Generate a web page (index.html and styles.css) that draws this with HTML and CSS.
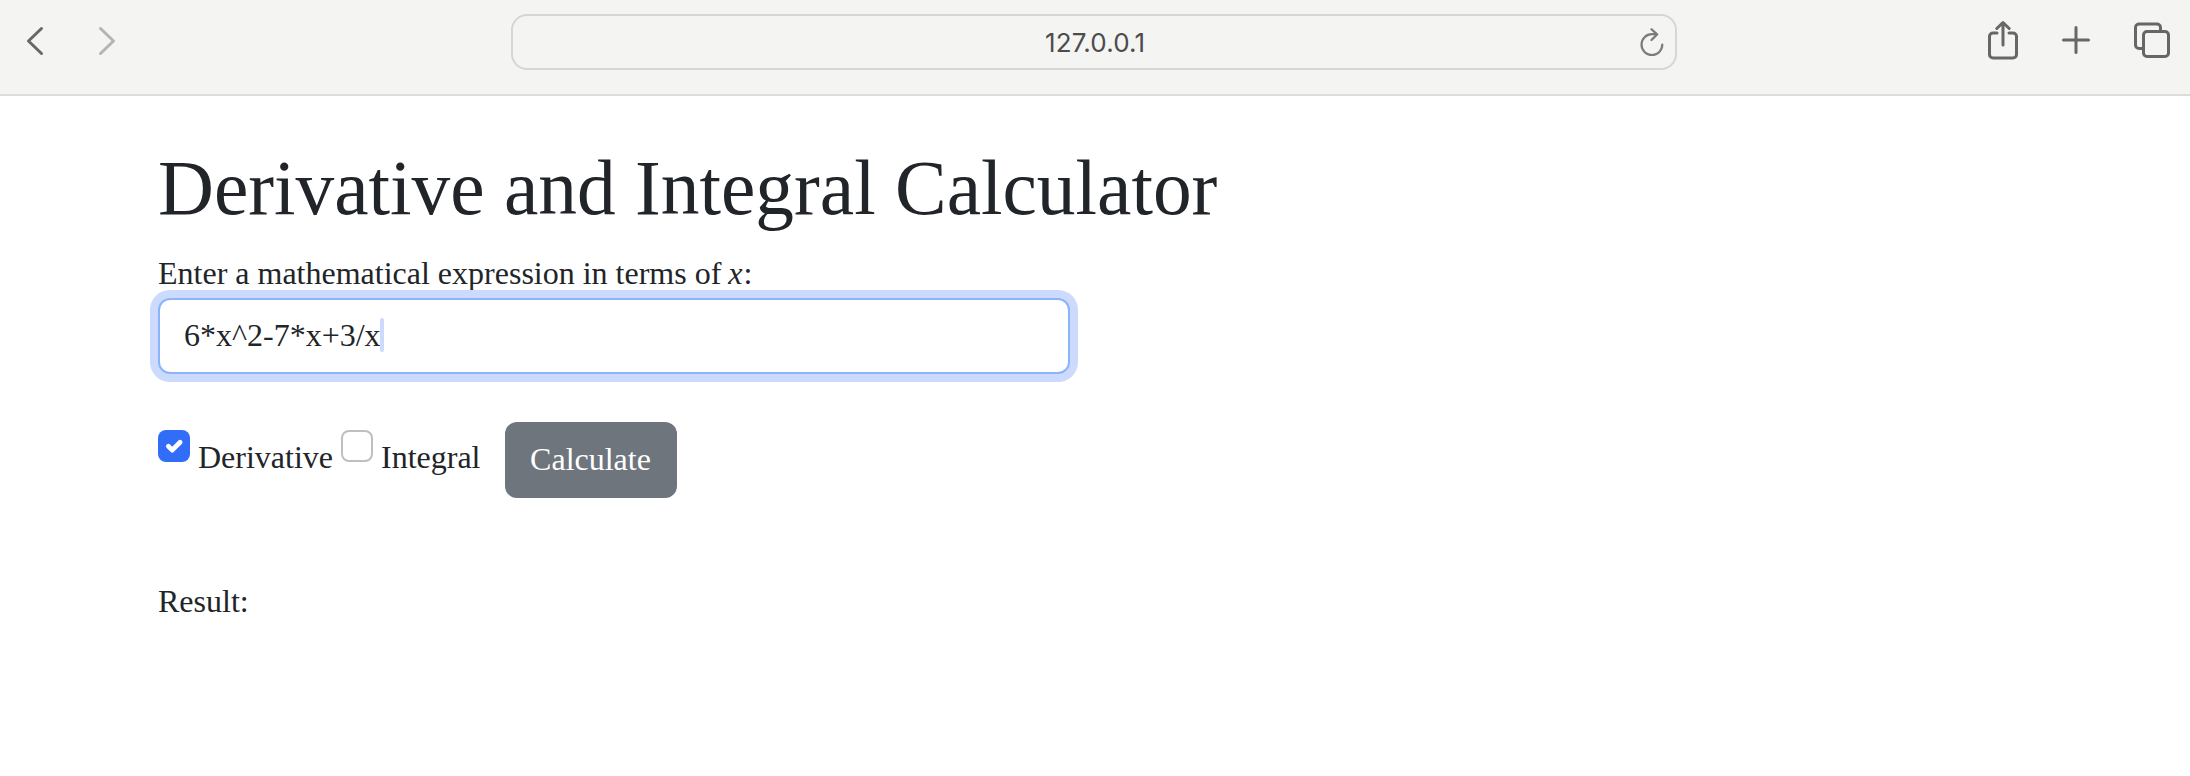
FILE: index.html
```html
<!DOCTYPE html>
<html lang="en">
<head>
<meta charset="utf-8">
<title>Derivative and Integral Calculator</title>
<link rel="stylesheet" href="styles.css">
</head>
<body>
<header class="toolbar">
  <nav class="history">
    <svg class="icon" width="20" height="32" viewBox="0 0 20 32"><path d="M16.5 3.500 3.500 16l13 12.500"/></svg>
    <svg class="icon icon-disabled" width="20" height="32" viewBox="0 0 20 32"><path d="M3.500 3.500l13 12.500-13 12.500"/></svg>
  </nav>
  <div class="address">
    <span class="url">127.0.0.1</span>
    <svg class="reload" width="26" height="30" viewBox="0 0 26 30"><path d="M23.300 16.500A10.400 10.400 0 1 1 13 6.200h5M12.500 1.200l5.600 5.200-5.600 5.600"/></svg>
  </div>
  <div class="actions">
    <svg class="icon" width="30" height="40" viewBox="0 0 30 40"><path d="M9 13H5a3.5 3.5 0 0 0-3.5 3.5v18A3.5 3.5 0 0 0 5 38h20a3.5 3.5 0 0 0 3.5-3.5v-18A3.5 3.5 0 0 0 25 13h-4M15 25V3M8.800 8.500 15 2.500l6.200 6"/></svg>
    <svg class="icon" width="28" height="28" viewBox="0 0 28 28"><path d="M14 1.500v25M1.500 14h25"/></svg>
    <svg class="icon" width="36" height="36" viewBox="0 0 36 36"><rect x="9.500" y="9.500" width="25" height="25" rx="3.500"/><path d="M9.500 26.500H5A3.500 3.500 0 0 1 1.500 23V5.500A3.500 3.500 0 0 1 5 2h18a3.500 3.500 0 0 1 3.500 3.500v4"/></svg>
  </div>
</header>
<main class="page">
  <h1 class="title">Derivative and Integral Calculator</h1>
  <div class="label">Enter a mathematical expression in terms of <i class="variable">x</i>:</div>
  <div class="field"><span class="expression">6*x^2-7*x+3/x</span><span class="caret"></span></div>
  <div class="controls">
    <span class="check check-on"><svg width="32" height="32" viewBox="0 0 20 20"><path d="m6.500 10.200 2.400 2.400 4.900-4.900"/></svg></span>
    <span class="option option-first">Derivative</span>
    <span class="check"></span>
    <span class="option">Integral</span>
    <button class="button">Calculate</button>
  </div>
  <p class="result">Result:</p>
</main>
</body>
</html>
```
FILE: styles.css
```css
* { box-sizing: border-box; }

body {
  margin: 0;
  background: #fff;
  color: #212529;
  font: 32px/48px "Liberation Serif", "Times New Roman", serif;
}

.toolbar {
  display: grid;
  grid-template-columns: 511px 1166px 1fr;
  height: 96px;
  padding-top: 14px;
  background: #f4f4f2;
  border-bottom: 2px solid #dcdcda;
}

.history {
  display: flex;
  gap: 52px;
  padding: 11px 0 0 25px;
}

.icon {
  fill: none;
  stroke: #676765;
  stroke-width: 3;
  stroke-linecap: round;
  stroke-linejoin: round;
}

.icon-disabled { stroke: #b4b4b2; }

.address {
  display: flex;
  align-items: center;
  height: 56px;
  padding-right: 10px;
  border: 2px solid #d6d6d4;
  border-radius: 16px;
}

.url {
  flex: 1;
  padding: 2px 0 0 532px;
  color: #4c4c4b;
  font: 26px/32px Inter, sans-serif;
  letter-spacing: 0.15px;
}

.reload {
  margin-top: 2px;
  fill: none;
  stroke: #7b7b79;
  stroke-width: 2.2;
  stroke-linecap: round;
  stroke-linejoin: round;
}

.actions {
  display: flex;
  align-items: center;
  height: 52px;
  padding-left: 310.5px;
}

.actions .icon:nth-child(2),
.actions .icon:nth-child(3) { margin-left: 44px; }

.page { padding: 44px 158px 0; }

.title {
  margin: 0 0 13px;
  font-size: 77.4px;
  font-weight: 400;
  line-height: 96px;
}

.label { height: 49px; }

.variable { margin: 0 1px 0 -1px; }

/* Positioned so the focus ring covers the label's descenders. */
.field {
  position: relative;
  display: flex;
  align-items: center;
  width: 912px;
  height: 76px;
  padding-left: 24px;
  border: 2px solid #8cb4fa;
  border-radius: 12px;
  background: #fff;
  box-shadow: 0 0 0 8px #cbdafd;
}

.expression { padding-bottom: 2px; }

.caret {
  width: 4px;
  height: 34px;
  margin-left: -1px;
  margin-bottom: 2px;
  border-radius: 2px;
  background: #cbdafd;
}

.controls {
  display: flex;
  height: 76px;
  margin-top: 48px;
}

.check {
  width: 32px;
  height: 32px;
  margin: 8px 8px 0 0;
  border: 2px solid #bfbfbf;
  border-radius: 8px;
}

.check-on {
  border: 0;
  background: #316df6;
}

.check-on svg {
  display: block;
  fill: none;
  stroke: #fff;
  stroke-width: 3;
  stroke-linecap: round;
  stroke-linejoin: round;
}

.option { padding-top: 11px; }

.option-first { width: 143px; }

.button {
  width: 172px;
  height: 76px;
  margin-left: 24px;
  padding: 0 0 2px;
  border: 0;
  border-radius: 12px;
  background: #6e757c;
  color: #fff;
  font: inherit;
}

.result { margin: 79px 0 0; }
```
